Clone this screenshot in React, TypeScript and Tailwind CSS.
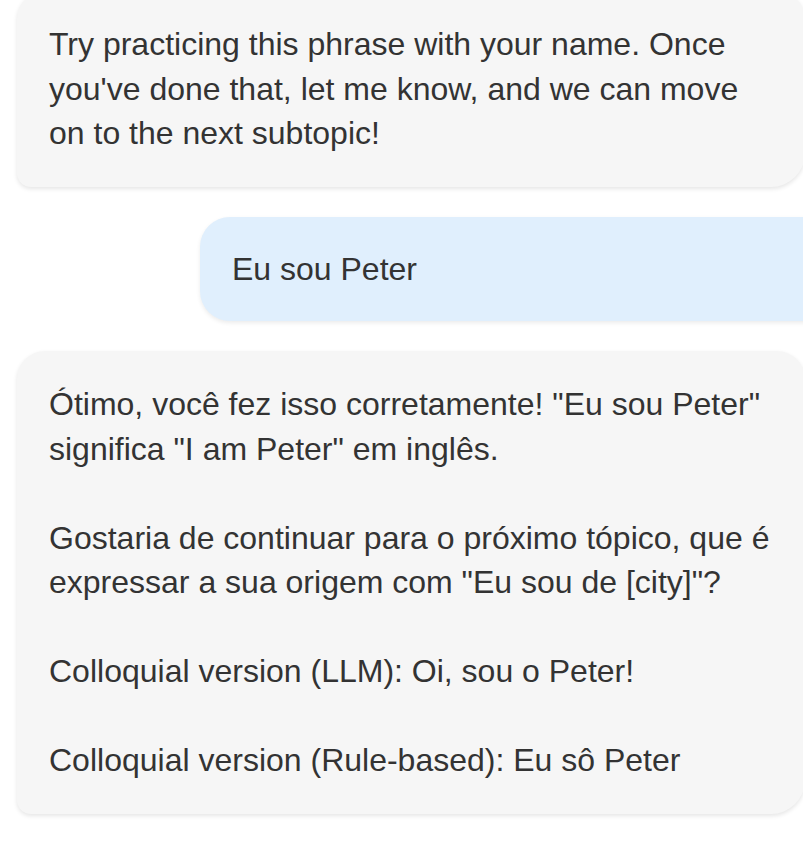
const messages = [
  {
    from: "bot",
    paragraphs: [
      "Try practicing this phrase with your name. Once you've done that, let me know, and we can move on to the next subtopic!",
    ],
  },
  { from: "user", paragraphs: ["Eu sou Peter"] },
  {
    from: "bot",
    paragraphs: [
      'Ótimo, você fez isso corretamente! "Eu sou Peter" significa "I am Peter" em inglês.',
      'Gostaria de continuar para o próximo tópico, que é expressar a sua origem com "Eu sou de [city]"?',
      "Colloquial version (LLM): Oi, sou o Peter!",
      "Colloquial version (Rule-based): Eu sô Peter",
    ],
  },
];

const App = () => {
  return (
    <div className="w-[803px] h-[843px] overflow-hidden bg-white font-['Liberation_Sans',Arial,sans-serif] text-[32px] leading-[44.5px] text-[#333333]">
      <div className="-mt-[9px] flex flex-col gap-[30px]">
        {messages.map((m, i) =>
          m.from === "bot" ? (
            <div
              key={i}
              className="ml-[17px] -mr-[2px] bg-[#f6f6f6] rounded-[28px] rounded-bl-[14px] rounded-br-[34px] pl-[32px] pr-[30px] py-[31px] shadow-[0_2px_4px_rgba(0,0,0,0.1)] flex flex-col gap-[44.5px]"
            >
              {m.paragraphs.map((p, j) => (
                <p key={j}>{p}</p>
              ))}
            </div>
          ) : (
            <div
              key={i}
              className="ml-[200px] -mr-[40px] bg-[#e0effd] rounded-[30px] px-[32px] py-[30px] shadow-[0_2px_4px_rgba(0,0,0,0.08)]"
            >
              {m.paragraphs.map((p, j) => (
                <p key={j}>{p}</p>
              ))}
            </div>
          )
        )}
      </div>
    </div>
  );
};

export default App;
